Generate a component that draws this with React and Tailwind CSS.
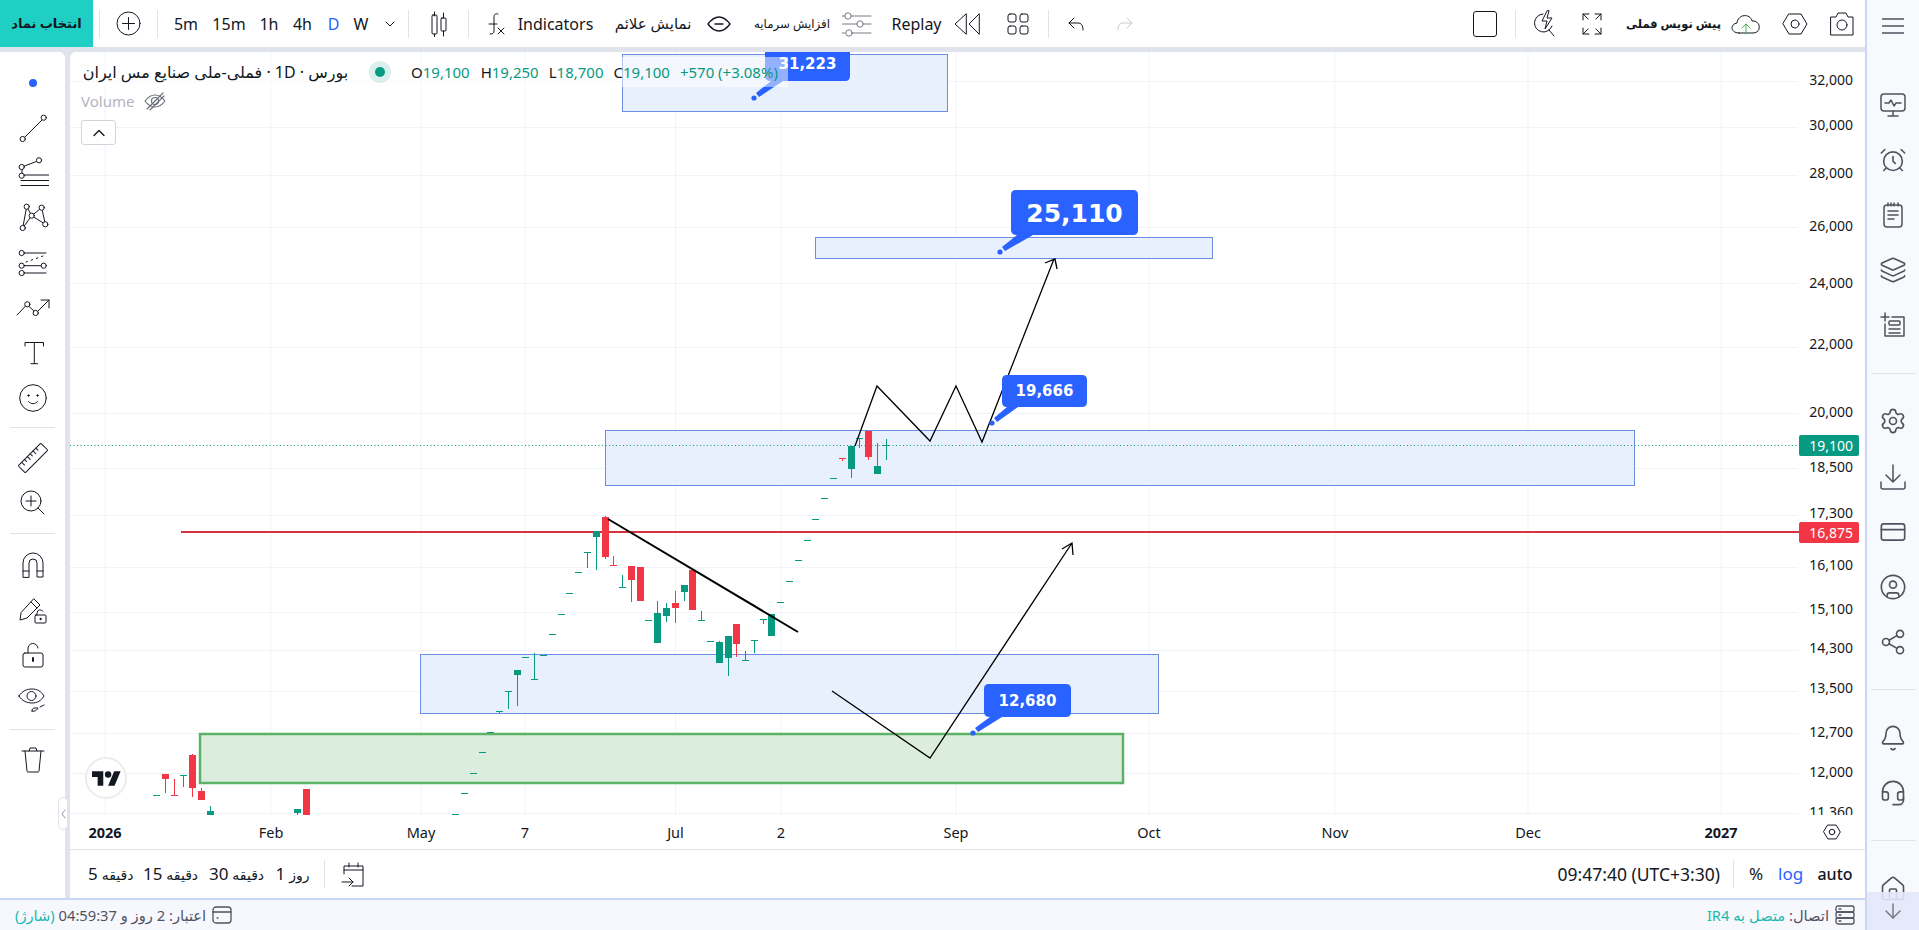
import React from 'react';
import { AlarmClock, Layers, Bell, Headset, Share2, CircleUser, House, ArrowDown, Settings, CreditCard } from 'lucide-react';

const S = ({ w = 24, h = 24, vb, children, className = '', sw = 1 }) => (
  <svg width={w} height={h} viewBox={vb || `0 0 ${w} ${h}`} fill="none" stroke="currentColor" strokeWidth={sw} strokeLinecap="round" strokeLinejoin="round" className={className}>{children}</svg>
);
const Sep = () => <div className="w-px h-[28px] bg-[#e0e3eb] shrink-0" />;
const Cell = ({ className = '', children }) => <div className={`flex items-center justify-center shrink-0 h-full ${className}`}>{children}</div>;
const HSep = () => <div className="h-px bg-[#e0e3eb] shrink-0 w-[45px]" />;

const Hex = ({ s = 26 }) => (
  <S w={s} h={s} vb="0 0 26 26" sw={26 / s}><path d="M7 3h12l6 10-6 10H7L1 13z" /><circle cx="13" cy="13" r="4" /></S>
);

function TopBar() {
  return (
    <div className="h-[47px] bg-white flex items-center shrink-0 text-[#131722] text-[16px]">
      <div className="w-[93px] h-full bg-[#20cfc4] flex items-center justify-center text-[13px] font-semibold shrink-0" dir="rtl">انتخاب نماد</div>
      <div className="ml-[6px]"><Sep /></div>
      <Cell className="w-[57px]"><S w={25} h={25}><circle cx="12.5" cy="12.5" r="11.5" /><path d="M12.500 6.500v12M6.500 12.500h12" /></S></Cell>
      <Sep />
      <div className="ml-[6px] flex h-full">
        <Cell className="w-[44px]">5m</Cell>
        <Cell className="w-[42px]">15m</Cell>
        <Cell className="w-[38px]">1h</Cell>
        <Cell className="w-[29px]">4h</Cell>
        <Cell className="w-[33px] text-[#2962ff]">D</Cell>
        <Cell className="w-[22px]">W</Cell>
        <Cell className="w-[36px]"><S w={10} h={6}><path d="M1 1l4 4 4-4" /></S></Cell>
      </div>
      <Sep />
      <Cell className="w-[59px]">
        <S w={18} h={26}><path d="M4.500 1v4M4.500 23v3M13.500 2v5M13.500 20v5" /><rect x="2" y="4" width="5" height="19" rx="1" /><rect x="11" y="7" width="5" height="13" rx="1" /></S>
      </Cell>
      <Sep />
      <Cell className="w-[42px] ml-[6px]">
        <S w={18} h={24}><path d="M2 12h8M11 2c-3-1-4 1-4 3v14c0 2-1 3-4 3" /><path d="M11 16l6 6M17 16l-6 6" /></S>
      </Cell>
      <Cell className="w-[77px]"><span className="whitespace-nowrap">Indicators</span></Cell>
      <Cell className="w-[82px] ml-[18px] text-[15px]"><span dir="rtl" className="whitespace-nowrap">نمایش علائم</span></Cell>
      <Cell className="w-[24px] ml-[13px]"><S w={24} h={16} sw={1.4}><path d="M1 8c3-4 7-7 11-7s8 3 11 7c-3 4-7 7-11 7S4 12 1 8z" /><path d="M8 8h8" /></S></Cell>
      <Cell className="w-[78px] ml-[22px] text-[11.8px]"><span dir="rtl" className="whitespace-nowrap">افزایش سرمایه</span></Cell>
      <Cell className="w-[30px] ml-[11px]">
        <S w={30} h={26} className="text-[#787b86]"><path d="M0 5h3M10 5h19M0 13h15M22 13h7M0 22h3M10 22h19" /><circle cx="6" cy="5" r="3.2" /><circle cx="18" cy="13" r="3.2" /><circle cx="7" cy="22" r="3.2" /></S>
      </Cell>
      <Cell className="w-[51px] ml-[19px]">Replay</Cell>
      <Cell className="w-[26px] ml-[12px]"><S w={26} h={22}><path d="M12 1L1 11l11 10zM25 1L15 11l10 10z" /></S></Cell>
      <Cell className="w-[22px] ml-[27px]"><S w={22} h={22}><rect x="1" y="1" width="8" height="8" rx="2" /><rect x="13" y="1" width="8" height="8" rx="2" /><rect x="1" y="13" width="8" height="8" rx="2" /><rect x="13" y="13" width="8" height="8" rx="2" /></S></Cell>
      <div className="ml-[19px]"><Sep /></div>
      <Cell className="w-[22px] ml-[17px]"><S w={18} h={16}><path d="M6 2L1 7l5 5" /><path d="M1 7h9c3 0 5 2 5 7" /></S></Cell>
      <Cell className="w-[22px] ml-[25px]"><S w={18} h={16} className="text-[#c9cbd1]"><path d="M12 2l5 5-5 5" /><path d="M17 7H8c-3 0-5 2-5 7" /></S></Cell>
      <div className="flex-1" />
      <Cell className="w-[24px]"><div className="w-[24px] h-[26px] border border-[#131722] rounded-[3px]" /></Cell>
      <div className="ml-[18px]"><Sep /></div>
      <Cell className="w-[26px] ml-[16px]">
        <S w={26} h={28}><path d="M11 4a9 9 0 1 0 9 12" /><path d="M15 1l-5 10h5l-2 8 7-11h-5l2-7z" /><path d="M17 20l5 6" /></S>
      </Cell>
      <Cell className="w-[22px] ml-[23px]">
        <S w={22} h={24}><path d="M2 8V2h6M2 2l5 5M20 8V2h-6M20 2l-5 5M2 16v6h6M2 22l5-5M20 16v6h-6M20 22l-5-5" /></S>
      </Cell>
      <Cell className="w-[91px] ml-[25px] text-[11.5px] font-bold"><span dir="rtl" className="whitespace-nowrap">پیش نویس فملی</span></Cell>
      <Cell className="w-[30px] ml-[12px]">
        <S w={30} h={22}><path d="M8 20c-9 0-9-9-2-10 1-9 13-10 15-2 9-1 10 12 1 12H8z" /><path d="M15 21v-10M11 15l4-4 4 4" stroke="#4caf50" /></S>
      </Cell>
      <Cell className="w-[26px] ml-[21px]"><Hex /></Cell>
      <Cell className="w-[26px] ml-[21px]">
        <S w={26} h={26}><path d="M2 6h5l2-4h8l2 4h5v18H2z" /><circle cx="13" cy="14" r="5" /></S>
      </Cell>
      <div className="w-[10px] shrink-0" />
    </div>
  );
}

const dots = (pts) => pts.map(([x, y], i) => <circle key={i} cx={x} cy={y} r="2.6" fill="white" />);

function Tool({ children }) {
  return <div className="h-[45px] flex items-center justify-center shrink-0 w-full">{children}</div>;
}

function LeftBar() {
  return (
    <div className="w-[65px] bg-white rounded-tr-[6px] flex flex-col items-center pt-2 shrink-0 text-[#131722]">
      <Tool><div className="w-[8px] h-[8px] rounded-full bg-[#2962ff]" /></Tool>
      <Tool><S w={32} h={32}><path d="M6 27L27 6" />{dots([[5.7, 27], [26.7, 5.7]])}</S></Tool>
      <Tool><S w={32} h={32}><path d="M5 10L22 3.500M5 10v9M6 18h26M4 23.500h28M4 28.500h28" />{dots([[22, 3.3], [4.7, 10], [4.7, 18.7]])}</S></Tool>
      <Tool><S w={32} h={32}><path d="M5.700 26L9.700 4.700 14.700 13.700 5.700 26M14.700 13.700L24.700 5.700 28.300 22.300 14.700 13.700" />{dots([[9.7, 4.7], [24.7, 5.7], [14.7, 13.7], [28.3, 22.3], [5.7, 26]])}</S></Tool>
      <Tool><S w={32} h={32}><path d="M7 6h22M7 18.700h18M7 26h22" /><path d="M9 15l20-7" strokeDasharray="1.5 4" />{dots([[4.7, 6], [4.7, 18.7], [4.7, 26], [26.7, 18.7]])}</S></Tool>
      <Tool><S w={34} h={32}><path d="M1 23L11 12.500l9 8.500L33 8M25 8h8v8" />{dots([[11.3, 12.3], [19.7, 21]])}</S></Tool>
      <Tool><S w={32} h={32}><path d="M8 9V5.500h18.500V9M17.300 5.500v21M14 26.700h6.600" /></S></Tool>
      <Tool><S w={30} h={30}><circle cx="15" cy="15" r="13.3" /><circle cx="10.5" cy="12.5" r=".7" fill="currentColor" /><circle cx="19.5" cy="12.5" r=".7" fill="currentColor" /><path d="M10.500 18.500c2 3 7 3 9 0" /></S></Tool>
      <div className="my-[7px]"><HSep /></div>
      <Tool><S w={34} h={34}><g transform="rotate(-45 17 17)"><rect x="1" y="12" width="32" height="10" rx="1" /><path d="M6 12v4M10 12v3M14 12v4M18 12v3M22 12v4M26 12v3" /></g></S></Tool>
      <Tool><S w={28} h={28}><circle cx="12" cy="12" r="10" /><path d="M12 7v10M7 12h10M19 19l6 6" /></S></Tool>
      <div className="my-[8px]"><HSep /></div>
      <Tool><S w={22} h={26}><path d="M1 25V11a10 10 0 0 1 20 0v14h-6V11a4 4 0 0 0-8 0v14z" /><path d="M1 19h6M15 19h6" /></S></Tool>
      <Tool><S w={28} h={28}><path d="M2 17l-1 7 7-2L21 9l-6-6zM12 6l6 6" /><rect x="16" y="19" width="11" height="8" rx="1" fill="white" /><path d="M18 19v-2a3.200 3.200 0 0 1 6-1.500" /><circle cx="21.5" cy="23" r=".7" fill="currentColor" /></S></Tool>
      <Tool><S w={22} h={26}><rect x="1" y="11" width="20" height="14" rx="2" /><path d="M6 11V7a5 5 0 0 1 10-1" /><path d="M11 16v3" strokeWidth="2" /></S></Tool>
      <Tool><S w={30} h={30}><path d="M1 11c3-5 8-7 13-7s9 2 12 7c-3 5-7 7-12 7s-10-2-13-7z" /><circle cx="13.5" cy="11" r="4.5" /><path d="M14 26c3 1 5-1 6-3l-3 0c-2 0-3 1-3 3zM22 22l4-2" /></S></Tool>
      <div className="my-[7px]"><HSep /></div>
      <Tool><S w={24} h={26}><path d="M1 4h22M4 4l2 20c0 1 1 1 1 1h10s1 0 1-1l2-20M8 4l1-3h6l1 3" /></S></Tool>
    </div>
  );
}

const P = [[80, '32,000'], [125, '30,000'], [173, '28,000'], [226, '26,000'], [283, '24,000'], [344, '22,000'], [412, '20,000'], [467, '18,500'], [513, '17,300'], [565, '16,100'], [609, '15,100'], [648, '14,300'], [688, '13,500'], [732, '12,700'], [772, '12,000'], [812, '11,360']];
const HL = [81, 127, 175, 227, 283, 347, 413, 468, 515, 567, 612, 650, 691, 733, 773, 813];
const VL = [105, 271, 421, 525, 675.5, 781, 956, 1149, 1335, 1528, 1721];
const G = '#089981', R = '#f23645';
// x, wickTop, wickBot, bodyTop, bodyBot, color
const C = [
  [156.5, 0, 0, 795, 795, G], [165.5, 774, 793, 774, 779, R], [174.5, 779, 796, 795, 795, R], [183.5, 775, 787, 775, 775, G],
  [192.5, 754, 797, 755, 788, R], [201.5, 788, 800, 791, 800, R], [210.5, 806, 815, 811, 815, G], [297.5, 809, 815, 809, 813, G],
  [306.5, 789, 815, 789, 815, R], [455.5, 0, 0, 814, 814, G], [464.5, 0, 0, 793, 793, G], [473.5, 0, 0, 773, 773, G], [482.5, 0, 0, 752, 752, G],
  [490.5, 0, 0, 732, 732, G], [499.5, 711, 713, 711, 711, G], [508.5, 691, 709, 691, 691, G], [517.5, 670, 706, 670, 675, G],
  [525.5, 0, 0, 657, 657, G], [534.5, 653, 679, 679, 679, G], [543.5, 0, 0, 655, 655, G], [552.5, 0, 0, 634, 634, G], [561.5, 0, 0, 614, 614, G],
  [569.5, 0, 0, 593, 593, G], [578.5, 0, 0, 572, 572, G], [587.5, 552, 568, 552, 552, G], [596.5, 531, 570, 531, 537, G], [605.5, 516, 559, 517, 557, R],
  [613.5, 556, 565, 565, 565, R], [622.5, 575, 587, 587, 587, G], [631.5, 566, 602, 566, 580, R], [640.5, 567, 601, 567, 601, R], [648.5, 0, 0, 620, 620, G],
  [657.5, 601, 643, 613, 643, G], [666.5, 603, 622, 608, 616, G], [675.5, 591, 623, 603, 608, R], [684.5, 585, 601, 585, 592, G], [692.5, 570, 610, 570, 610, R],
  [701.5, 611, 620, 620, 620, G], [710.5, 0, 0, 641, 641, G], [719.5, 641, 663, 642, 663, G], [728.5, 636, 676, 636, 658, G], [736.5, 624, 657, 624, 644, R],
  [745.5, 651, 660, 660, 660, G], [754.5, 640, 653, 640, 640, G], [763.5, 619, 624, 619, 619, G], [771.5, 614, 636, 614, 636, G], [780.5, 0, 0, 602, 602, G],
  [789.5, 0, 0, 581, 581, G], [798.5, 0, 0, 560, 560, G], [807.5, 0, 0, 540, 540, G], [815.5, 0, 0, 519, 519, G], [824.5, 0, 0, 498, 498, G], [833.5, 0, 0, 478, 478, G],
  [842.5, 458, 461, 458, 458, R], [851.5, 446, 478, 446, 469, G], [859.5, 438, 448, 438, 438, G], [868.5, 431, 460, 431, 457, R], [877.5, 443, 474, 466, 474, G], [886.5, 439, 460, 445.5, 445.5, G],
];

function Callout({ x, y, w, h, tx, ty, a, b, text, size, dx = 0, dy = 0 }) {
  const r = 5, B = y + h, Rt = x + w;
  const d = `M${x + r} ${y}H${Rt - r}Q${Rt} ${y} ${Rt} ${y + r}V${B - r}Q${Rt} ${B} ${Rt - r} ${B}H${x + b}L${tx + 5} ${ty - 1}L${tx + 2} ${ty - 5}L${x + a} ${B}Q${x} ${B} ${x} ${B - r}V${y + r}Q${x} ${y} ${x + r} ${y}Z`;
  return (
    <g>
      <path d={d} fill="#2962ff" />
      <circle cx={tx} cy={ty} r="2.6" fill="#2962ff" />
      <text x={x + w / 2 + dx} y={y + h / 2 + size * 0.36 + dy} textAnchor="middle" fontSize={size} fontWeight="700" fill="white" fontFamily="'DejaVu Sans',sans-serif">{text}</text>
    </g>
  );
}

function Chart() {
  const blue = { fill: '#e8effd', stroke: '#6b8fdf', strokeWidth: 1 };
  return (
    <svg width="1795" height="763" viewBox="70 52 1795 763" className="absolute inset-0">
      {HL.map((y) => <line key={y} x1="70" x2="1798" y1={y + .5} y2={y + .5} stroke="#f0f3fa" />)}
      {VL.map((x) => <line key={x} x1={x} x2={x} y1="52" y2="815" stroke="#f0f3fa" />)}
      <rect x="622.5" y="54.5" width="325" height="57" {...blue} />
      <rect x="815.5" y="237.5" width="397" height="21" {...blue} />
      <rect x="605.5" y="430.5" width="1029" height="55" {...blue} />
      <rect x="420.5" y="654.5" width="738" height="59" {...blue} />
      <rect x="200" y="734" width="923" height="49" fill="#dbeedd" stroke="#5cb265" strokeWidth="2.5" />
      <line x1="70" x2="1799" y1="445.5" y2="445.5" stroke={G} strokeDasharray="1 2.5" />
      <line x1="181" x2="1799" y1="532" y2="532" stroke="#d6323f" strokeWidth="2" />
      {C.map(([x, wt, wb, bt, bb, c], i) => (
        <g key={i}>
          {wt > 0 && <line x1={Math.floor(x) + .5} x2={Math.floor(x) + .5} y1={wt} y2={wb} stroke={c} />}
          {bb === bt
            ? <rect x={Math.floor(x) - 3} y={Math.floor(bt)} width="7" height="1" fill={c} />
            : <rect x={Math.floor(x) - 3} y={bt} width="7" height={bb - bt} fill={c} />}
        </g>
      ))}
      <line x1="608" y1="519" x2="798" y2="632" stroke="#000" strokeWidth="2" />
      <path d="M832 691L930 758L1072 543M1062 549L1072 543L1073 555" fill="none" stroke="#000" strokeWidth="1.3" />
      <path d="M855 446L877 386L930 441L956 386L982 442L1054 259M1045 263L1055 259L1057 269" fill="none" stroke="#000" strokeWidth="1.3" />
      <Callout x={1011} y={190} w={127} h={45} tx={1000} ty={252} a={6} b={22} text="25,110" size={25} />
      <Callout x={1002} y={375} w={85} h={32} tx={992} ty={423} a={5} b={16} text="19,666" size={15} />
      <Callout x={984} y={684} w={87} h={33} tx={973} ty={733} a={6} b={18} text="12,680" size={15} />
      <Callout x={765} y={40} w={85} h={41} tx={754} ty={98} a={6} b={18} text="31,223" size={15} dy={3} />
      {P.map(([y, t]) => <text key={t} x="1853" y={y + 5} textAnchor="end" fontSize="14" fill="#131722">{t}</text>)}
      <rect x="1799" y="435" width="60" height="21" rx="2" fill={G} />
      <text x="1853" y="450.5" textAnchor="end" fontSize="14" fill="white">19,100</text>
      <rect x="1799" y="522" width="60" height="21" rx="2" fill={R} />
      <text x="1853" y="537.5" textAnchor="end" fontSize="14" fill="white">16,875</text>
    </svg>
  );
}

function Legend() {
  const v = 'text-[#089981]';
  return (
    <div className="absolute left-[11px] top-[5px] flex flex-col items-start text-[#131722]">
      <div className="h-[30px] w-[707px] bg-white/50 flex items-center text-[15px]">
        <span dir="rtl" className="w-[269px] whitespace-nowrap text-[16px] text-center shrink-0">بورس · 1D · فملی-ملی صنایع مس ایران</span>
        <span className="ml-[19px] w-[22px] h-[22px] rounded-full bg-[#089981]/15 flex items-center justify-center shrink-0"><span className="w-[10px] h-[10px] rounded-full bg-[#089981]" /></span>
        <span className="ml-[20px] whitespace-nowrap">O<span className={v}>19,100</span></span>
        <span className="ml-[11px] whitespace-nowrap">H<span className={v}>19,250</span></span>
        <span className="ml-[10px] whitespace-nowrap">L<span className={v}>18,700</span></span>
        <span className="ml-[10px] whitespace-nowrap">C<span className={v}>19,100</span></span>
        <span className={`ml-[10px] whitespace-nowrap ${v}`}>+570 (+3.08%)</span>
      </div>
      <div className="h-[28px] flex items-center text-[15px] text-[#b2b5be]">
        Volume
        <span className="ml-[10px] text-[#6a6d78]"><S w={22} h={20} sw={1.1}><path d="M1 10c3-4 6-6 10-6s7 2 10 6c-3 4-6 6-10 6s-7-2-10-6z" /><circle cx="11" cy="10" r="3.5" /><path d="M3 18L19 2M6 19L20 5" /></S></span>
      </div>
      <div className="w-[35px] h-[25px] mt-[5px] bg-white border border-[#d1d4dc] rounded-[3px] flex items-center justify-center">
        <S w={12} h={8} sw={1.4}><path d="M1 6.500l5-5 5 5" /></S>
      </div>
    </div>
  );
}

const TL = [[105, '2026', 1], [271, 'Feb'], [421, 'May'], [525, '7'], [675.5, 'Jul'], [781, '2'], [956, 'Sep'], [1149, 'Oct'], [1335, 'Nov'], [1528, 'Dec'], [1721, '2027', 1]];

function RightBar() {
  const I = ({ children, className = '' }) => <div className={`h-[55px] flex items-center justify-center shrink-0 w-full ${className}`}>{children}</div>;
  const p = { size: 28, strokeWidth: 1.4 };
  return (
    <div className="w-[54px] shrink-0 bg-[#f8f9fd] border-l-2 border-[#c9d6f6] flex flex-col items-center relative overflow-hidden text-[#50535e]">
      <div className="h-[52px] flex items-center justify-center shrink-0">
        <S w={22} h={20} sw={1.4}><path d="M0 3h22M0 10h22M0 17h22" /></S>
      </div>
      <div className="h-[25px] shrink-0" />
      <I><S w={26} h={26} sw={1.5}><rect x="1" y="2" width="24" height="17" rx="3" /><path d="M8 24h10M13 19v5M5 11h4l2-3 3 6 2-3h5" /></S></I>
      <I><AlarmClock {...p} /></I>
      <I><S w={20} h={26} sw={1.5}><rect x="1" y="3" width="18" height="22" rx="3" /><path d="M5 1v3M8 1v3M11 1v3M15 1v3M5 9h10M5 13h10M5 17h6" /></S></I>
      <I><Layers {...p} /></I>
      <I><S w={26} h={26} sw={1.5}><path d="M1 5h8M5 1v8" /><path d="M12 5h12v19H5V12" /><rect x="9" y="9" width="11" height="4" rx="1" /><path d="M9 17h11M9 21h11" /></S></I>
      <div className="mt-[21px]"><HSep /></div>
      <div className="h-[19px] shrink-0" />
      <I><Settings {...p} /></I>
      <I className="mt-[1px]"><S w={26} h={26} sw={1.5}><path d="M13 1v17M6 11l7 7 7-7M1 18v5c0 1 1 2 2 2h20c1 0 2-1 2-2v-5" /></S></I>
      <I><CreditCard {...p} /></I>
      <I><CircleUser {...p} /></I>
      <I><Share2 {...p} /></I>
      <div className="mt-[20px]"><HSep /></div>
      <div className="h-[20px] shrink-0" />
      <I><Bell {...p} /></I>
      <I><Headset {...p} /></I>
      <div className="mt-[20px]"><HSep /></div>
      <div className="h-[20px] shrink-0" />
      <I><House {...p} /></I>
      <div className="absolute bottom-0 left-0 right-0 h-[38px] bg-[#e3e7fa]/90 flex items-center justify-center">
        <ArrowDown size={24} strokeWidth={1.5} className="text-[#787b86]" />
      </div>
    </div>
  );
}

const Range = ({ n, t, className }) => (
  <span className={`text-center whitespace-nowrap ${className}`}><span className="text-[17px]">{n}</span> <span className="text-[14px]">{t}</span></span>
);

export default function App() {
  return (
    <div className="w-screen h-screen flex overflow-hidden bg-[#e0e3eb] font-['Noto_Sans','DejaVu_Sans',sans-serif]">
      <div className="flex-1 min-w-0 flex flex-col">
        <TopBar />
        <div className="h-[5px] shrink-0" />
        <div className="flex-1 min-h-0 flex">
          <LeftBar />
          <div className="w-[5px] shrink-0 relative">
            <div className="absolute left-[-7px] top-[745px] w-[10px] h-[33px] bg-white border border-[#e0e3eb] rounded-[5px] flex items-center justify-center text-[#9598a1] z-10">
              <S w={5} h={10}><path d="M4 1L1 5l3 4" /></S>
            </div>
          </div>
          <div className="flex-1 min-w-0 bg-white rounded-tl-[6px] flex flex-col">
            <div className="relative flex-1 min-h-0 overflow-hidden">
              <Chart />
              <Legend />
              <div className="absolute left-[15px] top-[705px] w-[42px] h-[42px] rounded-full bg-white border-2 border-[#ececec] flex items-center justify-center">
                <svg width="29" height="15" viewBox="0 0 36 18" fill="#131722"><path d="M14 18H7V7H0V0h14v18zM28 18h-8L27.500 0h8L28 18z" /><circle cx="20" cy="4" r="4" /></svg>
              </div>
            </div>
            <div className="h-[35px] shrink-0 relative border-b border-[#e0e3eb] text-[14.5px] text-[#131722]">
              {TL.map(([x, t, b]) => (
                <span key={t} style={{ left: x - 70 }} className={`absolute top-[7px] -translate-x-1/2 ${b ? 'font-bold' : ''}`}>{t}</span>
              ))}
              <span className="absolute left-[1753px] top-[8px]"><Hex s={18} /></span>
            </div>
            <div className="h-[48px] shrink-0 flex items-center text-[#131722] text-[15px]">
              <Range n="5" t="دقیقه" className="ml-[18px] w-[41px]" />
              <Range n="15" t="دقیقه" className="ml-[14px] w-[50px]" />
              <Range n="30" t="دقیقه" className="ml-[16px] w-[49px]" />
              <Range n="1" t="روز" className="ml-[15px] w-[39px]" />
              <div className="ml-[12px]"><Sep /></div>
              <span className="ml-[16px]"><S w={24} h={26}><path d="M3 13V5h19v20H11M3 9h19M8 2v4M17 2v4M1 21h11M8 17l4 4-4 4" /></S></span>
              <div className="flex-1" />
              <span className="text-[17.5px] whitespace-nowrap">09:47:40 (UTC+3:30)</span>
              <div className="ml-[13px]"><Sep /></div>
              <span className="w-[44px] text-center text-[17px]">%</span>
              <span className="w-[25px] text-center text-[#2962ff] text-[17px]">log</span>
              <span className="ml-[7px] w-[50px] text-center text-[16px] font-medium">auto</span>
              <div className="w-[5px] shrink-0" />
            </div>
          </div>
        </div>
        <div className="h-[32px] shrink-0 bg-[#f7f8fe] border-t-2 border-[#c9d6f6] flex items-center justify-between text-[14.7px] text-[#50535e]">
          <div className="flex items-center ml-[15px]">
            <span dir="rtl" className="whitespace-nowrap">اعتبار: 2 روز و 04:59:37 <span className="text-[#22b8ae]">(شارژ)</span></span>
            <span className="ml-[6px]"><S w={20} h={18} sw={1.3}><rect x="1" y="1" width="18" height="16" rx="3" /><path d="M1 6h18M5 12h1" /></S></span>
          </div>
          <div className="flex items-center mr-[10px]">
            <span dir="rtl" className="whitespace-nowrap">اتصال: <span className="text-[#22b8ae]">متصل به IR4</span></span>
            <span className="ml-[6px]"><S w={20} h={20} sw={1.3}><rect x="1" y="1" width="18" height="6" rx="2" /><rect x="1" y="7" width="18" height="6" rx="2" /><rect x="1" y="13" width="18" height="6" rx="2" /><path d="M4 4h2M4 10h2M4 16h2" /></S></span>
          </div>
        </div>
      </div>
      <RightBar />
    </div>
  );
}
